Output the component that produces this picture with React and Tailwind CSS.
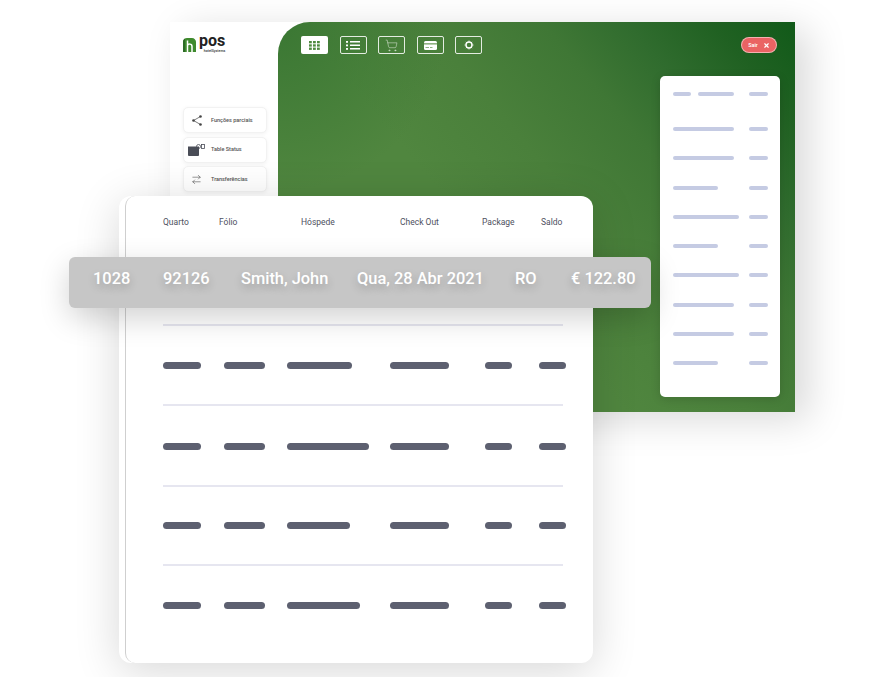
import React from "react";
import { ShoppingCart, ArrowRightLeft, X } from "lucide-react";

const roboto = "font-['Roboto',sans-serif]";

const panelRows = [
  [18, 36],
  [61],
  [61],
  [45],
  [66],
  [45],
  [66],
  [61],
  [61],
  [45],
];

const tableRows = [
  { h: 80, inner: 79, bars: [38, 41, 65, 59, 27, 27] },
  { h: 81, inner: 80, bars: [38, 41, 82, 59, 27, 27] },
  { h: 79, inner: 77, bars: [38, 41, 63, 59, 27, 27] },
  { h: 80, inner: 79, bars: [38, 41, 73, 59, 27, 27] },
];

function Logo() {
  return (
    <div className="flex items-start gap-[3px]">
      <svg width="13" height="14" viewBox="0 0 13 14" fill="none">
        <path d="M0 14V4C0 1.8 1.8 0 4 0H9C11.2 0 13 1.8 13 4V14Z" fill="#3f8a2e" />
        <path d="M0 14V4C0 2.5 .8 1.2 2 .6V14Z" fill="#2c6a26" />
        <path d="M4.5 2.5V14M4.5 7.5C5 5.8 9 5.2 9 8.5V14" stroke="#fff" strokeWidth="1.5" />
      </svg>
      <div className="-mt-[5px] flex flex-col items-end">
        <span className={`${roboto} text-[16px] leading-[16px] font-bold text-[#222]`}>pos</span>
        <span className={`${roboto} text-[3.5px] leading-[4px] font-medium text-[#333]`}>hotelSystems</span>
      </div>
    </div>
  );
}

function SideButton({ icon, label }) {
  return (
    <div className="flex h-[26px] w-[84px] items-center rounded-[5px] border border-[#f2f2f2] bg-white shadow-[0_1px_4px_rgba(0,0,0,0.06)]">
      <div className="flex w-[25px] shrink-0 justify-center">{icon}</div>
      <span className={`${roboto} ml-[2px] text-[5.5px] font-medium whitespace-nowrap text-[#555]`}>{label}</span>
    </div>
  );
}

function ShareIcon() {
  return (
    <svg width="10" height="11" viewBox="0 0 10 11" fill="#444">
      <path d="M8.5 1.5L1.5 5.5L8.5 9.5" fill="none" stroke="#444" strokeWidth=".7" />
      <circle cx="8.5" cy="1.5" r="1.3" />
      <circle cx="1.5" cy="5.5" r="1.3" />
      <circle cx="8.5" cy="9.5" r="1.3" />
    </svg>
  );
}

function TableStatusIcon() {
  return (
    <svg width="17" height="12" viewBox="0 0 17 12" fill="none">
      <path d="M0 2.5H11V11C11 11.5 10.5 12 10 12H1C.5 12 0 11.5 0 11Z" fill="#4a4d57" />
      <circle cx="10.5" cy="2.5" r="2" stroke="#4a4d57" strokeWidth=".8" />
      <rect x="13.5" y=".5" width="3" height="4" stroke="#4a4d57" strokeWidth=".8" />
    </svg>
  );
}

function GridIcon() {
  return (
    <svg width="11" height="9" viewBox="0 0 11 9" fill="#4f8a3f">
      {[0, 4, 8].map((x) =>
        [0, 3.3, 6.6].map((y) => <rect key={`${x}-${y}`} x={x} y={y} width="2.8" height="2.3" />),
      )}
    </svg>
  );
}

function ListIcon() {
  return (
    <svg width="14" height="9" viewBox="0 0 14 9" fill="#fff">
      {[0, 3.5, 7].map((y) => (
        <g key={y}>
          <rect y={y} width="2" height="1.8" />
          <rect x="4" y={y} width="10" height="1.5" />
        </g>
      ))}
    </svg>
  );
}

function CardIcon() {
  return (
    <svg width="13" height="9" viewBox="0 0 13 9">
      <rect width="13" height="9" rx="1.5" fill="#fff" />
      <rect y="2.2" width="13" height="1.3" fill="#74a063" />
      <rect x="1.5" y="6" width="3.5" height=".8" fill="#74a063" />
      <rect x="6" y="6" width="2.5" height=".8" fill="#74a063" />
    </svg>
  );
}

function GearIcon() {
  return (
    <svg width="10" height="10" viewBox="0 0 10 10" fill="none" stroke="#fff">
      <circle cx="5" cy="5" r="3" strokeWidth="1.4" />
      <path d="M5 .6V1.6M5 8.4V9.4M.6 5H1.6M8.4 5H9.4M1.9 1.9L2.6 2.6M7.4 7.4L8.1 8.1M1.9 8.1L2.6 7.4M7.4 2.6L8.1 1.9" strokeWidth="1" />
    </svg>
  );
}

function ToolButton({ active, children }) {
  return (
    <div
      className={`flex h-[18px] w-[27px] items-center justify-center rounded-[2px] border border-white/85 ${active ? "bg-white" : ""}`}
    >
      {children}
    </div>
  );
}

function Bar({ w, className }) {
  return <div className={`rounded-full ${className}`} style={{ width: w }} />;
}

function BackWindow() {
  return (
    <div className="absolute top-[22px] left-[170px] flex h-[390px] w-[625px] bg-white shadow-[14px_8px_36px_rgba(0,0,0,0.15)]">
      <aside className="w-[108px] shrink-0 bg-white pt-[16px] pl-[13px]">
        <Logo />
        <div className="mt-[54px] flex flex-col gap-[3.5px]">
          <SideButton icon={<ShareIcon />} label="Funções parciais" />
          <SideButton icon={<TableStatusIcon />} label="Table Status" />
          <SideButton icon={<ArrowRightLeft size={11} strokeWidth={1.2} className="text-[#444]" />} label="Transferências" />
        </div>
      </aside>
      <main className="flex flex-1 flex-col rounded-tl-[32px] bg-[radial-gradient(circle_at_0_0,#3a7733_0%,rgba(58,119,51,0)_170px),linear-gradient(50deg,#50863f_0%,#50863f_41%,#4a803b_56%,#3f7735_70%,#306c2e_80%,#206122_90%,#115a19_100%)] pr-[15px] pl-[23px]">
        <div className="flex items-center pt-[14px]">
          <div className="flex flex-1 gap-[11.5px]">
            <ToolButton active>
              <GridIcon />
            </ToolButton>
            <ToolButton>
              <ListIcon />
            </ToolButton>
            <ToolButton>
              <ShoppingCart size={13} strokeWidth={1} className="text-white/80" />
            </ToolButton>
            <ToolButton>
              <CardIcon />
            </ToolButton>
            <ToolButton>
              <GearIcon />
            </ToolButton>
          </div>
          <div className="mr-[3px] flex h-[16px] w-[36px] items-center justify-center gap-[5px] rounded-full border border-white/50 bg-[#ea6363]">
            <span className={`${roboto} text-[5.5px] font-medium text-white`}>Sair</span>
            <X size={7} strokeWidth={4} className="text-white" />
          </div>
        </div>
        <div className="flex justify-end">
          <div className="mt-[22px] flex h-[321px] w-[120px] flex-col gap-[25.3px] rounded-[5px] bg-white pt-[16px] pr-[12px] pl-[13px] shadow-[0_2px_10px_rgba(0,0,0,0.15)]">
            {panelRows.map((row, i) => (
              <div key={i} className={`flex h-[4px] justify-between ${i === 0 ? "mb-[5.7px]" : ""}`}>
                <div className="flex gap-[7px]">
                  {row.map((w, j) => (
                    <Bar key={j} w={w} className="h-[4px] bg-[#c5cbe3]" />
                  ))}
                </div>
                <Bar w={19} className="h-[4px] bg-[#c5cbe3]" />
              </div>
            ))}
          </div>
        </div>
      </main>
    </div>
  );
}

function FrontCard() {
  return (
    <div className="absolute top-[196px] left-[119px] flex h-[467px] w-[474px] rounded-[12px] bg-white pl-[6px] shadow-[0_8px_45px_rgba(0,0,0,0.16)]">
      <div className="flex-1 rounded-l-[10px] border-l border-[#cfcfcf] pl-[37px]">
        <div className={`${roboto} flex h-[128px] pt-[20px] text-[8.5px] leading-[12px] text-[#4e5060]`}>
          <span className="w-[56px]">Quarto</span>
          <span className="w-[82px]">Fólio</span>
          <span className="w-[99px]">Hóspede</span>
          <span className="w-[82px]">Check Out</span>
          <span className="w-[59px]">Package</span>
          <span>Saldo</span>
        </div>
        <div className="flex flex-col">
          {tableRows.map((row, i) => (
            <div key={i} className="w-[400px] border-t-2 border-[#e6e6f0]" style={{ height: row.h }}>
              <div
                className="grid w-[403px] grid-cols-[61px_63px_103px_95px_54px_27px] items-center"
                style={{ height: row.inner }}
              >
                {row.bars.map((w, j) => (
                  <Bar key={j} w={w} className="h-[7px] bg-[#5d6070]" />
                ))}
              </div>
            </div>
          ))}
        </div>
      </div>
    </div>
  );
}

function GuestStrip() {
  return (
    <div
      className={`${roboto} absolute top-[257px] left-[69px] flex h-[51px] w-[582px] items-center rounded-[6px] bg-[#c6c6c6] pb-[6px] pl-[24px] text-[16.4px] font-medium whitespace-nowrap text-white shadow-[0_10px_30px_rgba(0,0,0,0.18)] [text-shadow:0_4px_8px_rgba(0,0,0,0.22)]`}
    >
      <span className="w-[70px]">1028</span>
      <span className="w-[78px]">92126</span>
      <span className="w-[116px]">Smith, John</span>
      <span className="w-[158px]">Qua, 28 Abr 2021</span>
      <span className="w-[56px]">RO</span>
      <span>€ 122.80</span>
    </div>
  );
}

export default function App() {
  return (
    <div className="relative h-[677px] w-[877px] overflow-hidden bg-white">
      <BackWindow />
      <FrontCard />
      <GuestStrip />
    </div>
  );
}
